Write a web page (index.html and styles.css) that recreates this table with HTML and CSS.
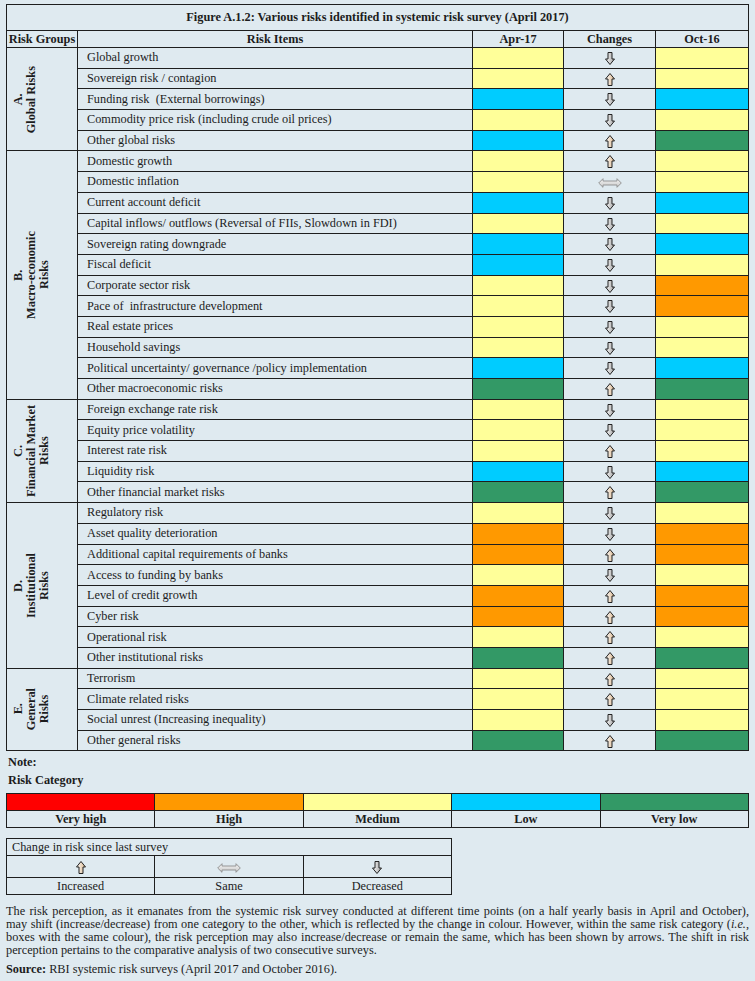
FILE: index.html
```html
<!DOCTYPE html>
<html>
<head>
<meta charset="utf-8">
<link rel="stylesheet" href="styles.css">
</head>
<body>
<svg class="defs" width="0" height="0">
  <defs>
    <linearGradient id="gd" x1="0" y1="0" x2="1" y2="0">
      <stop offset="0" stop-color="#ffffff"/>
      <stop offset="1" stop-color="#a0a0a0"/>
    </linearGradient>
    <linearGradient id="gu" x1="0" y1="0" x2="1" y2="0">
      <stop offset="0" stop-color="#ffffff"/>
      <stop offset="1" stop-color="#d9b48a"/>
    </linearGradient>
    <linearGradient id="gs" x1="0" y1="0" x2="0" y2="1">
      <stop offset="0" stop-color="#f4f4f4"/>
      <stop offset="1" stop-color="#c8c8c8"/>
    </linearGradient>
    <symbol id="down" viewBox="0 0 10 13"><polygon points="3,0.5 7,0.5 7,7 9.5,7 5,12.5 0.5,7 3,7" fill="url(#gd)" stroke="#222" stroke-width="1" stroke-linejoin="miter"/></symbol>
    <symbol id="up" viewBox="0 0 10 13"><polygon points="5,0.5 9.5,6 7,6 7,12.5 3,12.5 3,6 0.5,6" fill="url(#gu)" stroke="#222" stroke-width="1" stroke-linejoin="miter"/></symbol>
    <symbol id="same" viewBox="0 0 24 10"><polygon points="0.7,5 5,0.7 5,3 19,3 19,0.7 23.3,5 19,9.3 19,7 5,7 5,9.3" fill="url(#gs)" stroke="#8c8c8c" stroke-width="0.9"/></symbol>
  </defs>
</svg>

<table class="risk">
  <colgroup>
    <col class="c-grp"><col class="c-item"><col class="c-val"><col class="c-chg"><col class="c-val2">
  </colgroup>
  <tr class="title"><th colspan="5">Figure A.1.2: Various risks identified in systemic risk survey (April 2017)</th></tr>
  <tr class="head"><th class="grp-h">Risk Groups</th><th>Risk Items</th><th>Apr-17</th><th>Changes</th><th>Oct-16</th></tr>

  <tr><td class="grp" rowspan="5"><div class="rot">A.<br>Global Risks</div></td><td class="item">Global growth</td><td class="y"></td><td class="chg"><svg class="ad"><use href="#down"/></svg></td><td class="y"></td></tr>
  <tr><td class="item">Sovereign risk / contagion</td><td class="y"></td><td class="chg"><svg class="ad"><use href="#up"/></svg></td><td class="y"></td></tr>
  <tr><td class="item">Funding risk &nbsp;(External borrowings)</td><td class="b"></td><td class="chg"><svg class="ad"><use href="#down"/></svg></td><td class="b"></td></tr>
  <tr><td class="item">Commodity price risk (including crude oil prices)</td><td class="y"></td><td class="chg"><svg class="ad"><use href="#down"/></svg></td><td class="y"></td></tr>
  <tr><td class="item">Other global risks</td><td class="b"></td><td class="chg"><svg class="ad"><use href="#up"/></svg></td><td class="g"></td></tr>

  <tr><td class="grp" rowspan="12"><div class="rot">B.<br>Macro-economic<br>Risks</div></td><td class="item">Domestic growth</td><td class="y"></td><td class="chg"><svg class="ad"><use href="#up"/></svg></td><td class="y"></td></tr>
  <tr><td class="item">Domestic inflation</td><td class="y"></td><td class="chg"><svg class="as"><use href="#same"/></svg></td><td class="y"></td></tr>
  <tr><td class="item">Current account deficit</td><td class="b"></td><td class="chg"><svg class="ad"><use href="#down"/></svg></td><td class="b"></td></tr>
  <tr><td class="item">Capital inflows/ outflows (Reversal of FIIs, Slowdown in FDI)</td><td class="y"></td><td class="chg"><svg class="ad"><use href="#down"/></svg></td><td class="y"></td></tr>
  <tr><td class="item">Sovereign rating downgrade</td><td class="b"></td><td class="chg"><svg class="ad"><use href="#down"/></svg></td><td class="b"></td></tr>
  <tr><td class="item">Fiscal deficit</td><td class="b"></td><td class="chg"><svg class="ad"><use href="#down"/></svg></td><td class="y"></td></tr>
  <tr><td class="item">Corporate sector risk</td><td class="y"></td><td class="chg"><svg class="ad"><use href="#down"/></svg></td><td class="o"></td></tr>
  <tr><td class="item">Pace of &nbsp;infrastructure development</td><td class="y"></td><td class="chg"><svg class="ad"><use href="#down"/></svg></td><td class="o"></td></tr>
  <tr><td class="item">Real estate prices</td><td class="y"></td><td class="chg"><svg class="ad"><use href="#down"/></svg></td><td class="y"></td></tr>
  <tr><td class="item">Household savings</td><td class="y"></td><td class="chg"><svg class="ad"><use href="#down"/></svg></td><td class="y"></td></tr>
  <tr><td class="item">Political uncertainty/ governance /policy implementation</td><td class="b"></td><td class="chg"><svg class="ad"><use href="#down"/></svg></td><td class="b"></td></tr>
  <tr><td class="item">Other macroeconomic risks</td><td class="g"></td><td class="chg"><svg class="ad"><use href="#up"/></svg></td><td class="g"></td></tr>

  <tr><td class="grp" rowspan="5"><div class="rot">C.<br>Financial Market<br>Risks</div></td><td class="item">Foreign exchange rate risk</td><td class="y"></td><td class="chg"><svg class="ad"><use href="#down"/></svg></td><td class="y"></td></tr>
  <tr><td class="item">Equity price volatility</td><td class="y"></td><td class="chg"><svg class="ad"><use href="#down"/></svg></td><td class="y"></td></tr>
  <tr><td class="item">Interest rate risk</td><td class="y"></td><td class="chg"><svg class="ad"><use href="#up"/></svg></td><td class="y"></td></tr>
  <tr><td class="item">Liquidity risk</td><td class="b"></td><td class="chg"><svg class="ad"><use href="#down"/></svg></td><td class="b"></td></tr>
  <tr><td class="item">Other financial market risks</td><td class="g"></td><td class="chg"><svg class="ad"><use href="#up"/></svg></td><td class="g"></td></tr>

  <tr><td class="grp" rowspan="8"><div class="rot">D.<br>Institutional<br>Risks</div></td><td class="item">Regulatory risk</td><td class="y"></td><td class="chg"><svg class="ad"><use href="#down"/></svg></td><td class="y"></td></tr>
  <tr><td class="item">Asset quality deterioration</td><td class="o"></td><td class="chg"><svg class="ad"><use href="#down"/></svg></td><td class="o"></td></tr>
  <tr><td class="item">Additional capital requirements of banks</td><td class="o"></td><td class="chg"><svg class="ad"><use href="#up"/></svg></td><td class="o"></td></tr>
  <tr><td class="item">Access to funding by banks</td><td class="y"></td><td class="chg"><svg class="ad"><use href="#down"/></svg></td><td class="y"></td></tr>
  <tr><td class="item">Level of credit growth</td><td class="o"></td><td class="chg"><svg class="ad"><use href="#up"/></svg></td><td class="o"></td></tr>
  <tr><td class="item">Cyber risk</td><td class="o"></td><td class="chg"><svg class="ad"><use href="#up"/></svg></td><td class="o"></td></tr>
  <tr><td class="item">Operational risk</td><td class="y"></td><td class="chg"><svg class="ad"><use href="#up"/></svg></td><td class="y"></td></tr>
  <tr><td class="item">Other institutional risks</td><td class="g"></td><td class="chg"><svg class="ad"><use href="#up"/></svg></td><td class="g"></td></tr>

  <tr><td class="grp" rowspan="4"><div class="rot">E.<br>General<br>Risks</div></td><td class="item">Terrorism</td><td class="y"></td><td class="chg"><svg class="ad"><use href="#up"/></svg></td><td class="y"></td></tr>
  <tr><td class="item">Climate related risks</td><td class="y"></td><td class="chg"><svg class="ad"><use href="#up"/></svg></td><td class="y"></td></tr>
  <tr><td class="item">Social unrest (Increasing inequality)</td><td class="y"></td><td class="chg"><svg class="ad"><use href="#down"/></svg></td><td class="y"></td></tr>
  <tr><td class="item">Other general risks</td><td class="g"></td><td class="chg"><svg class="ad"><use href="#up"/></svg></td><td class="g"></td></tr>
</table>

<p class="note">Note:</p>
<p class="cat">Risk Category</p>

<table class="legend">
  <tr class="swatch"><td class="r"></td><td class="o"></td><td class="y"></td><td class="b"></td><td class="g"></td></tr>
  <tr class="lab"><td>Very high</td><td>High</td><td>Medium</td><td>Low</td><td>Very low</td></tr>
</table>

<table class="change">
  <tr class="ch-title"><td colspan="3">Change in risk since last survey</td></tr>
  <tr class="ch-arrows"><td><svg class="ad"><use href="#up"/></svg></td><td><svg class="as"><use href="#same"/></svg></td><td><svg class="ad"><use href="#down"/></svg></td></tr>
  <tr class="ch-lab"><td>Increased</td><td>Same</td><td>Decreased</td></tr>
</table>

<p class="para"><span class="ln">The risk perception, as it emanates from the systemic risk survey conducted at different time points (on a half yearly basis in April and October),</span> <span class="ln">may shift (increase/decrease) from one category to the other, which is reflected by the change in colour. However, within the same risk category (<i>i.e.</i>,</span> <span class="ln">boxes with the same colour), the risk perception may also increase/decrease or remain the same, which has been shown by arrows. The shift in risk</span> <span class="last">perception pertains to the comparative analysis of two consecutive surveys.</span></p>
<p class="src"><b>Source:</b> RBI systemic risk surveys (April 2017 and October 2016).</p>
</body>
</html>
```

FILE: styles.css
```css
html, body {
  margin: 0;
  background: #dfeaf0;
}
body {
  padding: 4px 6px 0 6px;
  font-family: "Liberation Serif", "Times New Roman", serif;
  font-size: 12.3px;
  color: #1c1c1c;
}
.defs {
  position: absolute;
  width: 0;
  height: 0;
}
table {
  border-collapse: collapse;
  table-layout: fixed;
}
td, th {
  border: 1px solid #1e1e1e;
  padding: 0;
}
.risk {
  width: 743px;
}
.c-grp { width: 71px; }
.c-item { width: 395px; }
.c-val { width: 91px; }
.c-chg { width: 92px; }
.c-val2 { width: 93px; }

.risk .title th {
  height: 25px;
  font-weight: bold;
  text-align: center;
}
.risk .head th {
  height: 16px;
  font-weight: bold;
  text-align: center;
}
.risk .head .grp-h {
  white-space: nowrap;
}
.risk tr {
  height: 20.7px;
}
.risk .title, .risk .head { height: auto; }
.item {
  padding-left: 9px;
  white-space: nowrap;
}
.grp {
  padding-left: 5px;
  vertical-align: middle;
}
.rot {
  writing-mode: vertical-rl;
  transform: rotate(180deg);
  text-align: center;
  font-weight: bold;
  line-height: 13px;
  margin: 0 auto 0 0;
}
.chg {
  text-align: center;
  vertical-align: middle;
}
.ad {
  width: 10px;
  height: 13px;
  display: inline-block;
  vertical-align: middle;
}
.as {
  width: 24px;
  height: 10px;
  display: inline-block;
  vertical-align: middle;
}
.y { background: #ffff99; }
.b { background: #00ccff; }
.g { background: #339966; }
.o { background: #ff9900; }
.r { background: #ff0000; }

.note, .cat {
  margin: 0;
  font-weight: bold;
  padding-left: 2px;
}
.note { margin-top: 3px; line-height: 16px; }
.cat { margin-top: 2px; line-height: 16px; }

.legend {
  width: 743px;
  margin-top: 5px;
}
.legend .swatch td { height: 16px; }
.legend .lab td {
  height: 16px;
  font-weight: bold;
  text-align: center;
}
.change {
  width: 446px;
  margin-top: 10px;
}
.change .ch-title td {
  height: 16px;
  padding-left: 5px;
}
.change .ch-arrows td {
  height: 21px;
  text-align: center;
}
.change .ch-lab td {
  height: 16px;
  text-align: center;
}
.para {
  margin: 10px 0 0 0;
  font-size: 12.3px;
  line-height: 12.8px;
}
.para .ln {
  display: block;
  text-align: justify;
  text-align-last: justify;
  white-space: nowrap;
}
.para .last {
  display: block;
}
.src {
  margin: 5px 0 0 0;
  font-size: 12.3px;
}
```
